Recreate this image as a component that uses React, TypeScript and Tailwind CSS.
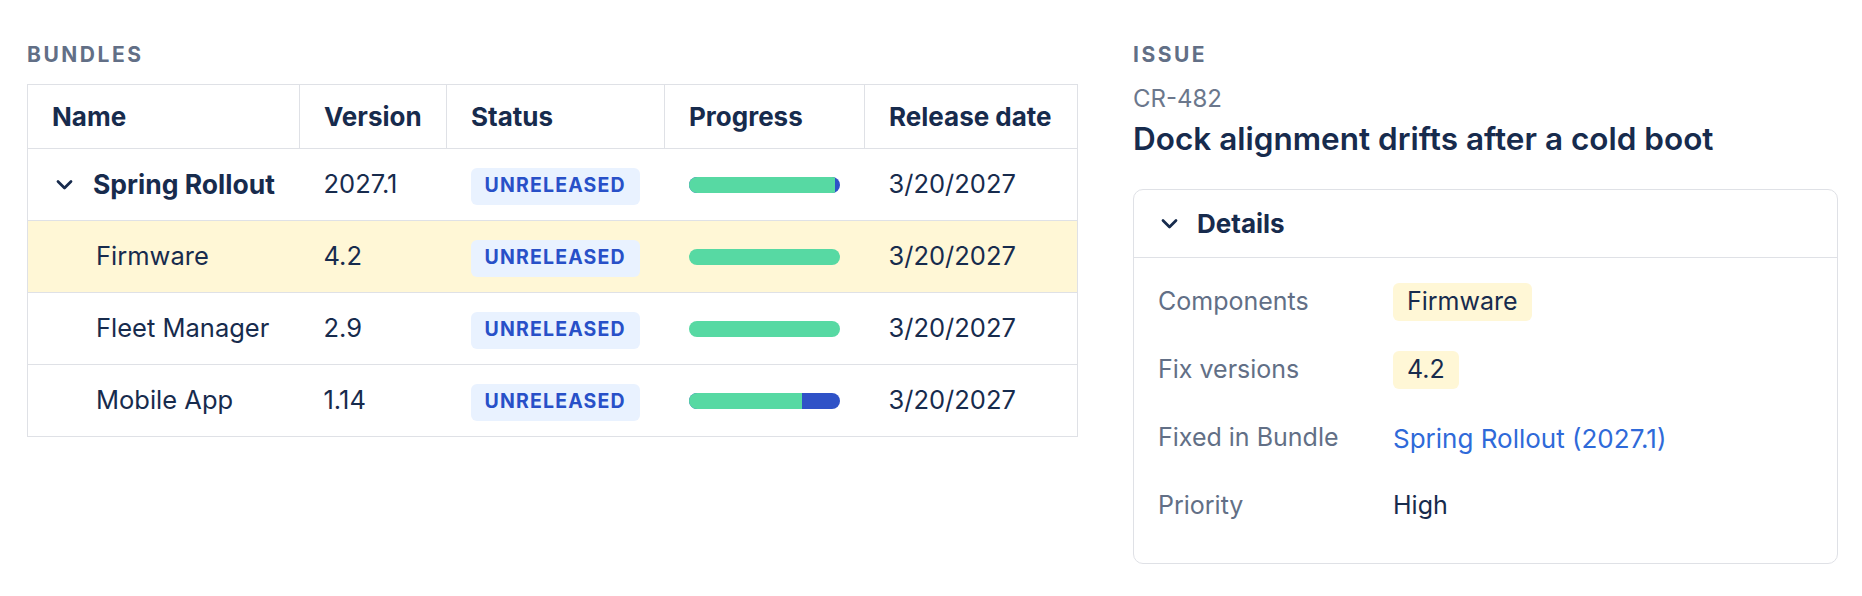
import React from 'react'

type Bundle = {
  name: string
  version: string
  done: number
  parent?: boolean
  highlight?: boolean
}

const rows: Bundle[] = [
  { name: 'Spring Rollout', version: '2027.1', done: 97, parent: true },
  { name: 'Firmware', version: '4.2', done: 100, highlight: true },
  { name: 'Fleet Manager', version: '2.9', done: 100 },
  { name: 'Mobile App', version: '1.14', done: 75 },
]

const details = [
  { label: 'Components', value: 'Firmware', kind: 'tag' },
  { label: 'Fix versions', value: '4.2', kind: 'tag' },
  { label: 'Fixed in Bundle', value: 'Spring Rollout (2027.1)', kind: 'link' },
  { label: 'Priority', value: 'High', kind: 'text' },
]

function Chevron() {
  return (
    <svg width="17" height="11" viewBox="0 0 17 11" fill="none" className="shrink-0">
      <path d="M2 2.5L8.5 9L15 2.5" stroke="#172B4D" strokeWidth="2.75" strokeLinecap="round" strokeLinejoin="round" />
    </svg>
  )
}

function Progress({ done }: { done: number }) {
  return (
    <div className="flex h-[16px] w-[151px] overflow-hidden rounded-full bg-[#2f52c7]">
      <div className="h-full bg-[#57d9a3]" style={{ width: `${done}%` }} />
    </div>
  )
}

export default function App() {
  return (
    <div
      className="flex gap-[55px] bg-white px-[27px] pt-[43px] text-[#172B4D]"
      style={{ fontFamily: 'Inter, "Noto Sans", sans-serif' }}
    >
      {/* Bundles */}
      <section className="w-[1051px] shrink-0">
        <p className="text-[21px] leading-[24px] font-bold uppercase tracking-[0.12em] text-[#626F86]">Bundles</p>
        <table className="mt-[17px] w-full border-collapse border border-[#dfe1e6] text-[25.5px]">
          <thead>
            <tr className="h-[64px] border-b border-[#dfe1e6] text-left text-[26px]">
              <th className="w-[272px] border-r border-[#dfe1e6] px-[24px] font-bold">Name</th>
              <th className="w-[147px] border-r border-[#dfe1e6] px-[24px] font-bold">Version</th>
              <th className="w-[218px] border-r border-[#dfe1e6] px-[24px] font-bold">Status</th>
              <th className="w-[200px] border-r border-[#dfe1e6] px-[24px] font-bold">Progress</th>
              <th className="px-[24px] font-bold">Release date</th>
            </tr>
          </thead>
          <tbody>
            {rows.map(r => (
              <tr key={r.name} className={`h-[72px] border-b border-[#dfe1e6] ${r.highlight ? 'bg-[#fff7d6]' : ''}`}>
                <td className="px-[24px]">
                  {r.parent ? (
                    <div className="flex items-center">
                      <span className="ml-[4px] mr-[20px] flex"><Chevron /></span>
                      <span className="text-[26.5px] font-bold">{r.name}</span>
                    </div>
                  ) : (
                    <span className="pl-[44px]">{r.name}</span>
                  )}
                </td>
                <td className="px-[24px]">{r.version}</td>
                <td className="px-[24px]">
                  <span className="inline-flex h-[37px] items-center rounded-[6px] bg-[#e9f2ff] px-[14px] text-[19.5px] font-bold tracking-[0.06em] text-[#2850c8]">
                    UNRELEASED
                  </span>
                </td>
                <td className="px-[24px]">
                  <Progress done={r.done} />
                </td>
                <td className="px-[24px]">3/20/2027</td>
              </tr>
            ))}
          </tbody>
        </table>
      </section>

      {/* Issue */}
      <section className="w-[705px] shrink-0">
        <p className="text-[21px] leading-[24px] font-bold uppercase tracking-[0.12em] text-[#626F86]">Issue</p>
        <p className="mt-[16px] text-[24px] leading-[32px] text-[#6B778C]">CR-482</p>
        <h1 className="mt-[4px] text-[31.5px] leading-[40px] font-semibold">Dock alignment drifts after a cold boot</h1>
        <div className="mt-[30px] rounded-[10px] border border-[#dfe1e6]">
          <div className="flex h-[68px] items-center border-b border-[#dfe1e6] px-[27px]">
            <span className="mr-[19px] flex"><Chevron /></span>
            <span className="text-[26px] font-bold">Details</span>
          </div>
          <div className="flex flex-col gap-[30px] px-[24px] pt-[25px] pb-[38px] text-[25px]">
            {details.map(d => (
              <div key={d.label} className="flex h-[38px] items-center">
                <span className="w-[235px] shrink-0 text-[#626F86]">{d.label}</span>
                {d.kind === 'tag' && (
                  <span className="inline-flex h-[38px] items-center rounded-[6px] bg-[#fff7d6] px-[14px]">{d.value}</span>
                )}
                {d.kind === 'link' && <span className="text-[26px] text-[#2f6ad9]">{d.value}</span>}
                {d.kind === 'text' && <span>{d.value}</span>}
              </div>
            ))}
          </div>
        </div>
      </section>
    </div>
  )
}
